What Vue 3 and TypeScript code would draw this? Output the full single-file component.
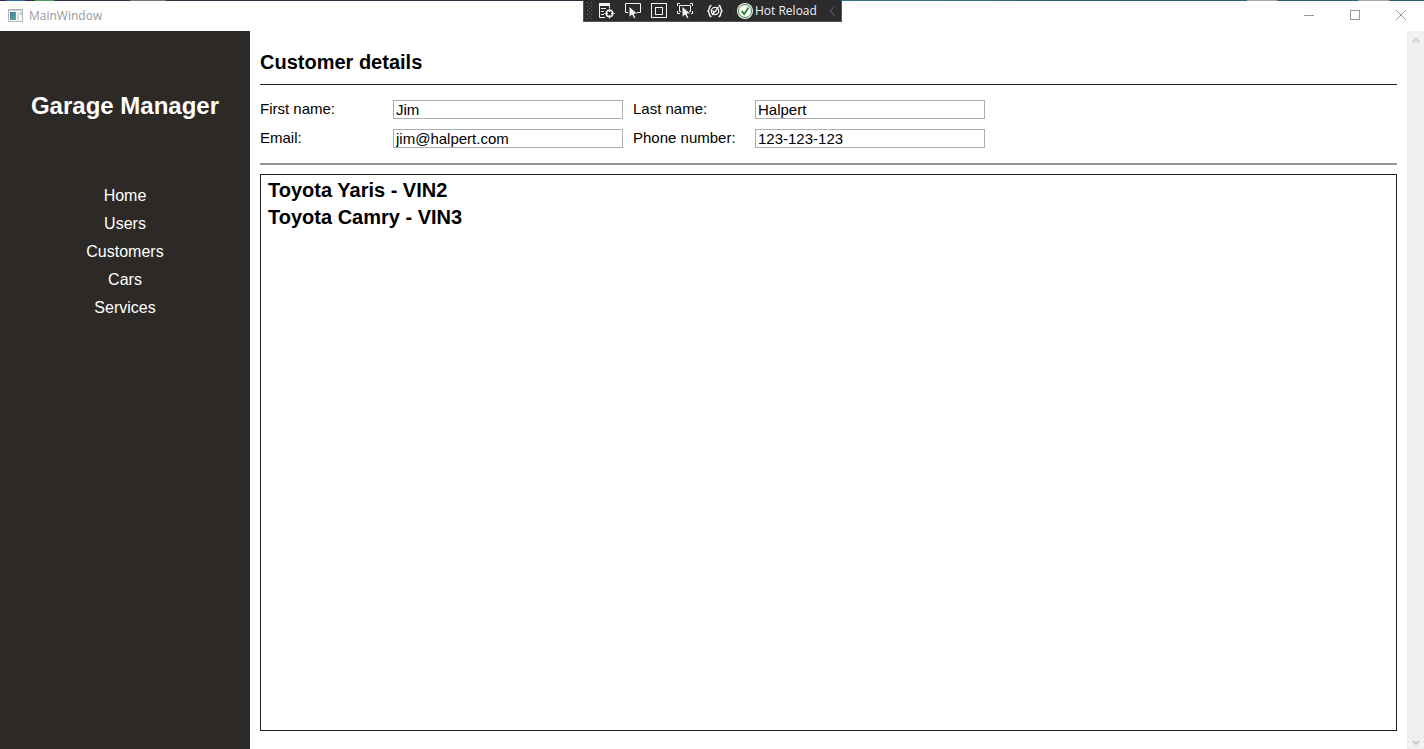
<script setup lang="ts">
import { reactive } from 'vue'

interface Field {
  id: string
  label: string
}

const menu: string[] = ['Home', 'Users', 'Customers', 'Cars', 'Services']
const fields: Field[] = [
  { id: 'firstName', label: 'First name:' },
  { id: 'lastName', label: 'Last name:' },
  { id: 'email', label: 'Email:' },
  { id: 'phone', label: 'Phone number:' },
]
const customer = reactive<Record<string, string>>({
  firstName: 'Jim',
  lastName: 'Halpert',
  email: 'jim@halpert.com',
  phone: '123-123-123',
})
const cars: string[] = ['Toyota Yaris - VIN2', 'Toyota Camry - VIN3']
</script>

<template>
  <div class="window">
    <header class="titlebar">
      <div class="app-id">
        <svg class="app-icon" width="15" height="13" viewBox="0 0 15 13" aria-hidden="true">
          <defs>
            <linearGradient id="pane" x1="0" y1="0" x2="1" y2="1">
              <stop offset="0" stop-color="#3f74a8" />
              <stop offset="1" stop-color="#67b184" />
            </linearGradient>
          </defs>
          <rect x="0.5" y="0.5" width="14" height="12" fill="#fafafa" stroke="#b3b7bb" />
          <path d="M1 1.5H14" stroke="#c9cdd1" />
          <rect x="2" y="3" width="6" height="8" fill="url(#pane)" />
          <rect x="9" y="3" width="2" height="8" fill="#dcdcdc" />
          <rect x="12" y="3" width="2" height="3" fill="#a9d5bd" />
        </svg>
        <span>MainWindow</span>
      </div>
      <div class="caption-buttons">
        <button type="button" aria-label="Minimize">
          <svg width="10" height="10" viewBox="0 0 10 10"><path d="M0 5.5H10" /></svg>
        </button>
        <button type="button" aria-label="Maximize">
          <svg width="10" height="10" viewBox="0 0 10 10"><rect x="0.5" y="0.5" width="9" height="9" /></svg>
        </button>
        <button type="button" aria-label="Close">
          <svg width="10" height="10" viewBox="0 0 10 10"><path d="M0 0L10 10M10 0L0 10" /></svg>
        </button>
      </div>
      <div class="debug-bar" role="toolbar" aria-label="Debug tools">
        <svg class="grip" width="7" height="18" viewBox="0 0 7 18" aria-hidden="true">
          <defs>
            <pattern id="dots" width="4" height="4" patternUnits="userSpaceOnUse">
              <rect width="1" height="1" fill="#68686c" />
              <rect x="2" y="2" width="1" height="1" fill="#68686c" />
            </pattern>
          </defs>
          <rect width="5" height="18" fill="url(#dots)" />
        </svg>
        <button type="button" aria-label="Go to Live Visual Tree">
          <svg width="16" height="16" viewBox="0 0 16 16">
            <path d="M0 1.5H11" stroke-width="3" />
            <path d="M0.5 2V14.5H6M10.5 2V5M2 5.5H7M2 8.5H5M2 11.5H5" />
            <circle cx="10.5" cy="10.500" r="3.200" stroke-width="1.500" />
            <path d="M10.5 5.500V9M10.5 12V15.500M5.500 10.5H9M12 10.5H15.500" />
          </svg>
        </button>
        <button type="button" aria-label="Select Element">
          <svg width="16" height="16" viewBox="0 0 16 16">
            <path d="M3.500 9.5H0.5V0.5H15.5V9.5H11" />
            <path class="solid" d="M4 3V14.500L7 12L9 16L11 15L9.200 11H13Z" />
          </svg>
        </button>
        <button type="button" aria-label="Display Layout Adorners">
          <svg width="16" height="16" viewBox="0 0 16 16">
            <rect x="0.5" y="0.5" width="15" height="14" />
            <rect x="4.5" y="4.5" width="7" height="7" />
          </svg>
        </button>
        <button type="button" aria-label="Track Focused Element">
          <svg width="16" height="16" viewBox="0 0 16 16">
            <path d="M0.5 3V0.5H3M13 0.5H15.5V3M0.5 8V10.5H3M15.5 8V10.5H13M4 8.5H2.5V2.5H13.5V8.5H12" />
            <path class="solid" d="M5 3V14.500L8 12L10 16L12 15L10.200 11H14Z" />
          </svg>
        </button>
        <span class="divider"></span>
        <button type="button" aria-label="Scan for Binding Failures">
          <svg width="16" height="16" viewBox="0 0 16 16">
            <path d="M4.500 2.500C1.500 2 3.200 6.500 1 8C3.200 9.500 1.500 14 4.500 13.500M11.500 2.500C14.500 2 12.800 6.500 15 8C12.800 9.500 14.500 14 11.500 13.500" stroke-width="1.500" />
            <circle cx="8" cy="8" r="3.700" stroke-width="1.300" />
            <path d="M5.500 7.500L7.500 9.500L11.500 4M5 12L7 9.500" stroke-width="1.300" />
          </svg>
        </button>
        <span class="divider"></span>
        <button type="button" class="reload">
          <svg width="16" height="16" viewBox="0 0 16 16" aria-hidden="true">
            <circle cx="8" cy="8" r="8" class="disc" />
            <circle cx="8" cy="8" r="6.500" class="ring" />
            <path d="M4.500 8L7.200 11L11.500 4.500" class="tick" />
          </svg>
          <span>Hot Reload</span>
        </button>
        <button type="button" class="collapse" aria-label="Collapse">
          <svg width="6" height="10" viewBox="0 0 6 10"><path d="M5.500 0.500L1 5L5.500 9.500" /></svg>
        </button>
      </div>
    </header>

    <div class="body">
      <aside class="sidebar">
        <h1>Garage Manager</h1>
        <nav>
          <a v-for="item in menu" :key="item" href="#">{{ item }}</a>
        </nav>
      </aside>

      <main class="content">
        <h2>Customer details</h2>
        <form class="details" @submit.prevent>
          <template v-for="field in fields" :key="field.id">
            <label :for="field.id">{{ field.label }}</label>
            <input :id="field.id" v-model="customer[field.id]" type="text" />
          </template>
        </form>
        <ul class="cars">
          <li v-for="car in cars" :key="car">{{ car }}</li>
        </ul>
      </main>

      <div class="scrollbar" aria-hidden="true">
        <svg width="8" height="6" viewBox="0 0 8 6"><path d="M1 5L4 2L7 5" /></svg>
        <svg width="8" height="6" viewBox="0 0 8 6"><path d="M1 1L4 4L7 1" /></svg>
      </div>
    </div>
  </div>
</template>

<style>
body {
  margin: 0;
}
</style>

<style scoped>
.window {
  box-sizing: border-box;
  min-height: 100vh;
  display: flex;
  flex-direction: column;
  background: #fff;
  color: #000;
  font-family: "Liberation Sans", Arial, sans-serif;
}

button {
  padding: 0;
  border: 0;
  background: none;
  color: inherit;
  font: inherit;
}

svg {
  display: block;
  flex: none;
}

.titlebar {
  position: relative;
  box-sizing: border-box;
  height: 31px;
  display: flex;
  justify-content: space-between;
  padding: 1px 0 2px;
  background: linear-gradient(
      to right,
      #2b3040 6px,
      #2c6a9c 6px 25px,
      #2b3040 25px 35px,
      #4f9a5c 35px 54px,
      #2b3040 54px 130px,
      #77747a 130px 166px,
      #2b3040 166px 41%,
      #37708a 59%,
      #2a5f7c 80%,
      #2a5f7c calc(100% - 177px),
      #a5a3a6 calc(100% - 177px) calc(100% - 147px),
      #2a5f7c calc(100% - 147px) calc(100% - 66px),
      #a5a3a6 calc(100% - 66px) calc(100% - 35px),
      #2a5f7c calc(100% - 35px)
    )
    top / 100% 1px no-repeat;
}

.app-id {
  display: flex;
  align-items: center;
  gap: 6px;
  padding-left: 8px;
  color: #999;
  font-family: "Open Sans", sans-serif;
  font-size: 12px;
}

.caption-buttons {
  display: flex;
}

.caption-buttons button {
  width: 46px;
  display: flex;
  align-items: center;
  justify-content: center;
}

.caption-buttons svg {
  fill: none;
  stroke: #999;
}

.debug-bar {
  position: absolute;
  top: 0;
  left: 583px;
  box-sizing: border-box;
  width: 259px;
  height: 22px;
  display: flex;
  align-items: center;
  padding: 1px 0 0 3px;
  border: 1px solid #555558;
  border-top: 0;
  background: #2b2b2e;
  color: #f2f2f2;
  font-family: "Open Sans", sans-serif;
  font-size: 12px;
}

.debug-bar button {
  width: 26px;
  display: flex;
  justify-content: center;
}

.debug-bar button svg {
  fill: none;
  stroke: #f2f2f2;
}

.debug-bar button .solid {
  fill: #f2f2f2;
  stroke: #2b2b2e;
}

.divider {
  width: 1px;
  height: 14px;
  margin: 0 1px 0 2px;
  background: #222224;
}

.debug-bar .reload {
  width: auto;
  align-items: center;
  gap: 2px;
  margin-left: 5px;
  line-height: 16px;
}

.debug-bar .disc {
  fill: #f2f2f2;
  stroke: none;
}

.debug-bar .ring {
  fill: #fff;
  stroke: #388a42;
}

.debug-bar .tick {
  stroke: #388a42;
  stroke-width: 2;
}

.debug-bar .collapse {
  width: 18px;
  margin-left: auto;
}

.debug-bar .collapse svg {
  stroke: #68686c;
}

.body {
  flex: 1;
  display: flex;
}

.sidebar {
  width: 250px;
  flex: none;
  background: #2d2926;
  color: #fff;
  text-align: center;
}

.sidebar h1 {
  margin: 60px 0 0;
  font-size: 24px;
  line-height: 30px;
}

.sidebar nav {
  display: flex;
  flex-direction: column;
  align-items: center;
  gap: 8px;
  margin-top: 65px;
}

.sidebar a {
  color: inherit;
  font-size: 16px;
  line-height: 20px;
  text-decoration: none;
}

.content {
  flex: 1;
  min-width: 0;
  display: flex;
  flex-direction: column;
  padding: 20px 10px 18px;
}

.content h2 {
  margin: 0;
  padding-bottom: 10px;
  border-bottom: 1px solid #222;
  font-size: 20px;
  line-height: 23px;
}

.details {
  display: grid;
  grid-template-columns: 123px 230px 112px 230px;
  column-gap: 10px;
  row-gap: 10px;
  padding: 15px 0;
  border-bottom: 2px solid #949494;
}

.details label {
  font-size: 15px;
  line-height: 18px;
}

.details input {
  box-sizing: border-box;
  width: 100%;
  height: 19px;
  padding: 0 2px;
  border: 1px solid #abadb3;
  border-radius: 0;
  background: #fff;
  color: #000;
  font: 15px/17px "Liberation Sans", Arial, sans-serif;
}

.cars {
  flex: 1;
  margin: 9px 0 0;
  padding: 2px 7px;
  border: 1px solid #222;
  list-style: none;
  font-size: 20px;
  font-weight: bold;
  line-height: 27px;
}

.scrollbar {
  width: 17px;
  box-sizing: border-box;
  display: flex;
  flex-direction: column;
  align-items: center;
  justify-content: space-between;
  padding: 6px 0 3px;
  background: #f0f0f0;
}

.scrollbar svg {
  fill: none;
  stroke: #cdcdcd;
  stroke-width: 2;
}
</style>
